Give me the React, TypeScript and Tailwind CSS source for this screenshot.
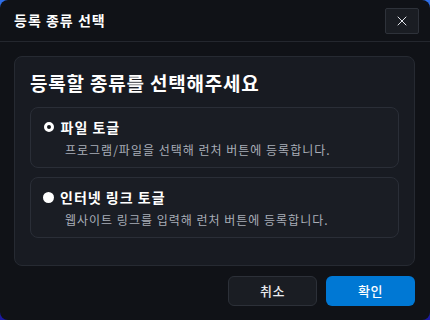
import { X } from 'lucide-react'

const font = { fontFamily: '"Noto Sans CJK KR", "Noto Sans", sans-serif' }

function Option({
  title,
  desc,
  checked,
}: {
  title: string
  desc: string
  checked?: boolean
}) {
  return (
    <div className="h-[61px] rounded-lg border border-[#2a2e37] bg-[#1a1d24] px-3 pt-[9px]">
      <div className="flex items-center">
        {checked ? (
          <span className="ml-[0.5px] mr-[7px] h-[10px] w-[10px] rounded-full border-[3px] border-white bg-[#15171c]" />
        ) : (
          <span className="mr-[6px] h-[11px] w-[11px] rounded-full bg-white" />
        )}
        <span className="text-[14px] font-bold leading-[20px] tracking-[1px] text-white">{title}</span>
      </div>
      <p className="mt-[4px] pl-[22px] text-[12px] leading-[18px] tracking-[1px] text-[#a9aeb8]">{desc}</p>
    </div>
  )
}

export default function App() {
  return (
    <div className="h-[320px] w-[430px] bg-[linear-gradient(to_bottom,#2f6fe8,#1c1aa0)]" style={font}>
      <div className="flex h-full w-full flex-col rounded-lg bg-[#101217]">
        {/* Header */}
        <div className="flex h-[42px] items-center justify-between border-b border-[#24272e] pl-[14px] pr-[11px]">
          <h2 className="text-[14px] font-bold tracking-[1px] text-white">등록 종류 선택</h2>
          <button
            type="button"
            className="flex h-[26px] w-[34px] items-center justify-center rounded-[2px] border border-[#2e323a] bg-[#1a1d23] text-[#e3e6ec]"
          >
            <X size={16} strokeWidth={1.5} />
          </button>
        </div>

        {/* Body */}
        <div className="px-[14px] pt-[14px] pr-[15px]">
          <div className="h-[210px] rounded-lg border border-[#262a32] bg-[#181b22] px-[15px] pt-[11px]">
            <h3 className="text-[19px] font-bold leading-[30px] tracking-[0.8px] text-white">등록할 종류를 선택해주세요</h3>
            <div className="mt-[9px] flex flex-col gap-[9px]">
              <Option checked title="파일 토글" desc="프로그램/파일을 선택해 런처 버튼에 등록합니다." />
              <Option title="인터넷 링크 토글" desc="웹사이트 링크를 입력해 런처 버튼에 등록합니다." />
            </div>
          </div>
        </div>

        {/* Footer */}
        <div className="mt-[10px] flex justify-end gap-[9px] pr-[15px]">
          <button
            type="button"
            className="h-[30px] w-[89px] rounded-md border border-[#2c3038] bg-[#1a1d23] text-[13px] font-medium tracking-[0.5px] text-[#e8eaee]"
          >
            취소
          </button>
          <button
            type="button"
            className="h-[30px] w-[89px] rounded-md bg-[#0078d4] text-[13px] font-medium tracking-[0.5px] text-white"
          >
            확인
          </button>
        </div>
      </div>
    </div>
  )
}
